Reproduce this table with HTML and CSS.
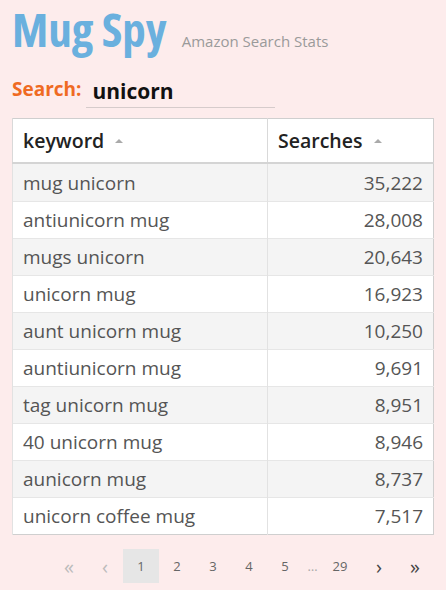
FILE: index.html
```html
<!DOCTYPE html>
<html>
<head>
<meta charset="utf-8">
<link rel="stylesheet" href="styles.css">
</head>
<body>
<div class="page">
  <header class="head">
    <h1 class="title">Mug Spy</h1>
    <span class="subtitle">Amazon Search Stats</span>
  </header>
  <div class="search">
    <label class="search-label">Search:</label>
    <div class="search-input">unicorn</div>
  </div>
  <table class="grid">
    <thead>
      <tr>
        <th class="col-kw">keyword <span class="sort"></span></th>
        <th class="col-num">Searches <span class="sort"></span></th>
      </tr>
    </thead>
    <tbody>
      <tr><td>mug unicorn</td><td class="num">35,222</td></tr>
      <tr><td>antiunicorn mug</td><td class="num">28,008</td></tr>
      <tr><td>mugs unicorn</td><td class="num">20,643</td></tr>
      <tr><td>unicorn mug</td><td class="num">16,923</td></tr>
      <tr><td>aunt unicorn mug</td><td class="num">10,250</td></tr>
      <tr><td>auntiunicorn mug</td><td class="num">9,691</td></tr>
      <tr><td>tag unicorn mug</td><td class="num">8,951</td></tr>
      <tr><td>40 unicorn mug</td><td class="num">8,946</td></tr>
      <tr><td>aunicorn mug</td><td class="num">8,737</td></tr>
      <tr><td>unicorn coffee mug</td><td class="num">7,517</td></tr>
    </tbody>
  </table>
  <nav class="pager">
    <span class="pg dim">«</span>
    <span class="pg dim">‹</span>
    <span class="pg active">1</span>
    <span class="pg">2</span>
    <span class="pg">3</span>
    <span class="pg">4</span>
    <span class="pg">5</span>
    <span class="pg dots">…</span>
    <span class="pg">29</span>
    <span class="pg arrow next">›</span>
    <span class="pg arrow">»</span>
  </nav>
</div>
</body>
</html>
```
FILE: styles.css
```css
html, body {
  margin: 0;
  padding: 0;
  background: #fdecec;
}
body {
  font-family: "Open Sans", "Liberation Sans", sans-serif;
  color: #555;
}
.page {
  padding: 0 12px 0 12px;
}
.head {
  display: flex;
  align-items: baseline;
  height: 66px;
}
.title {
  margin: -4px 0 0 0;
  font-family: "Open Sans", sans-serif;
  font-weight: 700;
  font-stretch: 77%;
  font-size: 47px;
  line-height: 66px;
  color: #6ab0de;
}
.subtitle {
  margin-left: 15px;
  font-size: 15px;
  color: #9a9a9a;
}
.search {
  display: flex;
  align-items: flex-start;
  padding-top: 11px;
  height: 41px;
}
.search-label {
  font-size: 19px;
  font-weight: 700;
  color: #ef6a22;
  line-height: 24px;
}
.search-input {
  margin-left: 5px;
  width: 183px;
  padding: 0 0 2px 6px;
  font-size: 21px;
  font-weight: 700;
  color: #111;
  line-height: 28px;
  border-bottom: 1px solid #d6cbcb;
}
.grid {
  width: 422px;
  border-collapse: collapse;
  background: #fff;
  border: 1px solid #cfcfcf;
  font-size: 19px;
}
.grid th {
  height: 43px;
  text-align: left;
  font-weight: 600;
  font-size: 19.5px;
  color: #222;
  padding: 0 10px;
  border-left: 1px solid #d9d9d9;
  border-bottom: 2px solid #d4d4d4;
}
.col-kw { width: 234px; }
.sort {
  display: inline-block;
  width: 0;
  height: 0;
  margin-left: 6px;
  vertical-align: middle;
  border-left: 4px solid transparent;
  border-right: 4px solid transparent;
  border-bottom: 4px solid #aaa;
  position: relative;
  top: -2px;
}
.grid td {
  height: 36px;
  padding: 0 10px;
  border-left: 1px solid #e2e2e2;
  border-top: 1px solid #e6e6e6;
}
.grid tbody tr:first-child td { border-top: none; height: 37px; }
.grid tbody tr:nth-child(odd) td { background: #f4f4f4; }
.grid td.num { text-align: right; }
.pager {
  display: flex;
  justify-content: flex-end;
  padding: 14px 1px 0 0;
  font-size: 13px;
  color: #666;
}
.pg {
  width: 36px;
  height: 34px;
  display: flex;
  align-items: center;
  justify-content: center;
}
.pg.dim { color: #bbb; font-size: 20px; }
.pg.arrow { color: #444; font-size: 20px; }
.pg.next { margin-left: 3px; }
.pg.active { background: #e6e6e6; }
.pg.dots { width: 19px; color: #aaa; }
```
